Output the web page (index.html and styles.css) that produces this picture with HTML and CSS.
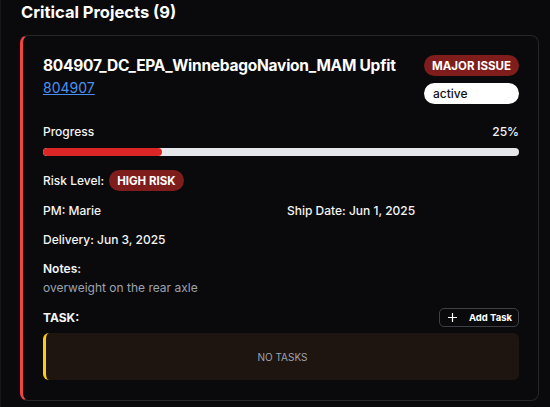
FILE: index.html
```html
<!DOCTYPE html>
<html>
<head>
<meta charset="utf-8">
<link rel="stylesheet" href="styles.css">
</head>
<body>
<div class="page">
  <h2 class="section-title">Critical Projects (9)</h2>
  <div class="card">
    <div class="card-head">
      <div class="head-text">
        <div class="proj-title">804907_DC_EPA_WinnebagoNavion_MAM Upfit</div>
        <a class="proj-link" href="#">804907</a>
      </div>
      <div class="badges">
        <span class="badge badge-issue">MAJOR ISSUE</span>
        <span class="badge badge-status">active</span>
      </div>
    </div>

    <div class="progress">
      <div class="progress-labels">
        <span>Progress</span>
        <span>25%</span>
      </div>
      <div class="bar"><div class="bar-fill" style="width:25%"></div></div>
    </div>

    <div class="risk-row">
      <span>Risk Level:</span>
      <span class="badge badge-risk">HIGH RISK</span>
    </div>

    <div class="info-grid">
      <div>PM: Marie</div>
      <div>Ship Date: Jun 1, 2025</div>
      <div>Delivery: Jun 3, 2025</div>
    </div>

    <div class="notes">
      <div class="notes-label">Notes:</div>
      <div class="notes-text">overweight on the rear axle</div>
    </div>

    <div class="task-head">
      <span class="task-label">TASK:</span>
      <button class="add-btn">
        <svg width="9" height="9" viewBox="0 0 9 9"><path d="M4.5 0v9M0 4.5h9" stroke="#fff" stroke-width="1.2" fill="none"/></svg>
        <span>Add Task</span>
      </button>
    </div>
    <div class="tasks-box">NO TASKS</div>
  </div>
</div>
</body>
</html>
```
FILE: styles.css
```css
html, body {
  margin: 0;
  padding: 0;
  background: #0a0a0c;
}
body {
  font-family: Inter, "Noto Sans", sans-serif;
  color: #f4f4f5;
  width: 550px;
  height: 407px;
  overflow: hidden;
}
.page {
  padding: 0 11px 0 20px;
  border-left: 1px solid #16171b;
  height: 407px;
  box-sizing: border-box;
}
.section-title {
  margin: 0;
  padding: 1px 0 0 0;
  font-size: 16.5px;
  line-height: 22px;
  font-weight: 700;
  color: #fff;
}
.card {
  margin-top: 12px;
  margin-left: -1px;
  width: 519px;
  box-sizing: border-box;
  border: 1px solid #27272a;
  border-left: 3px solid #ef4444;
  border-radius: 8px;
  background: #0a0a0c;
  padding: 18px 19px 20px 20px;
}
.card-head {
  display: flex;
  justify-content: space-between;
  align-items: flex-start;
}
.proj-title {
  font-size: 15.5px;
  font-weight: 700;
  line-height: 22px;
  margin-top: 1px;
  letter-spacing: -0.25px;
  color: #fff;
}
.proj-link {
  display: inline-block;
  font-size: 14px;
  line-height: 18px;
  color: #4a8ff0;
  text-decoration: underline;
}
.badges {
  display: flex;
  flex-direction: column;
  gap: 7px;
  width: 95px;
  margin-top: 1px;
}
.badge {
  display: inline-flex;
  align-items: center;
  height: 21px;
  border-radius: 11px;
  font-size: 11px;
  font-weight: 700;
  padding: 0 9px;
  box-sizing: border-box;
  white-space: nowrap;
}
.badge-issue {
  background: #7f1d1d;
  color: #fff;
  justify-content: center;
  font-size: 11.5px;
  padding: 0;
}
.badge-status {
  background: #fff;
  color: #111;
  font-size: 12px;
  font-weight: 500;
}
.progress {
  margin-top: 20px;
}
.progress-labels {
  display: flex;
  justify-content: space-between;
  font-size: 12px;
  font-weight: 500;
  line-height: 16px;
}
.bar {
  margin-top: 8px;
  height: 8px;
  border-radius: 4px;
  background: #e5e7eb;
  overflow: hidden;
}
.bar-fill {
  height: 100%;
  background: #dc2626;
  border-radius: 4px;
}
.risk-row {
  margin-top: 14px;
  display: flex;
  align-items: center;
  gap: 5px;
  font-size: 12px;
  font-weight: 500;
}
.badge-risk {
  background: #7f1d1d;
  color: #fff;
  font-size: 11.5px;
  padding: 0 8px;
}
.info-grid {
  margin-top: 12px;
  display: grid;
  grid-template-columns: 1fr 1fr;
  column-gap: 12px;
  row-gap: 13px;
  font-size: 12px;
  font-weight: 500;
  line-height: 16px;
}
.notes {
  margin-top: 13px;
}
.notes-label {
  font-size: 12px;
  font-weight: 600;
  line-height: 16px;
}
.notes-text {
  margin-top: 3px;
  font-size: 12px;
  color: #9ca3af;
  line-height: 16px;
}
.task-head {
  margin-top: 12px;
  display: flex;
  justify-content: space-between;
  align-items: center;
}
.task-label {
  font-size: 12px;
  font-weight: 700;
}
.add-btn {
  display: flex;
  align-items: center;
  gap: 12px;
  height: 19px;
  padding: 0 0 0 8px;
  border: 1px solid #3f3f46;
  border-radius: 5px;
  background: transparent;
  color: #fff;
  font-family: Inter, sans-serif;
  font-size: 9.5px;
  font-weight: 700;
  box-sizing: border-box;
  width: 80px;
  white-space: nowrap;
}
.tasks-box {
  margin-top: 6px;
  height: 47px;
  border-left: 3px solid #facc15;
  border-radius: 6px;
  background: #1f1510;
  display: flex;
  align-items: center;
  justify-content: center;
  font-size: 10px;
  color: #9ca3af;
}
```
